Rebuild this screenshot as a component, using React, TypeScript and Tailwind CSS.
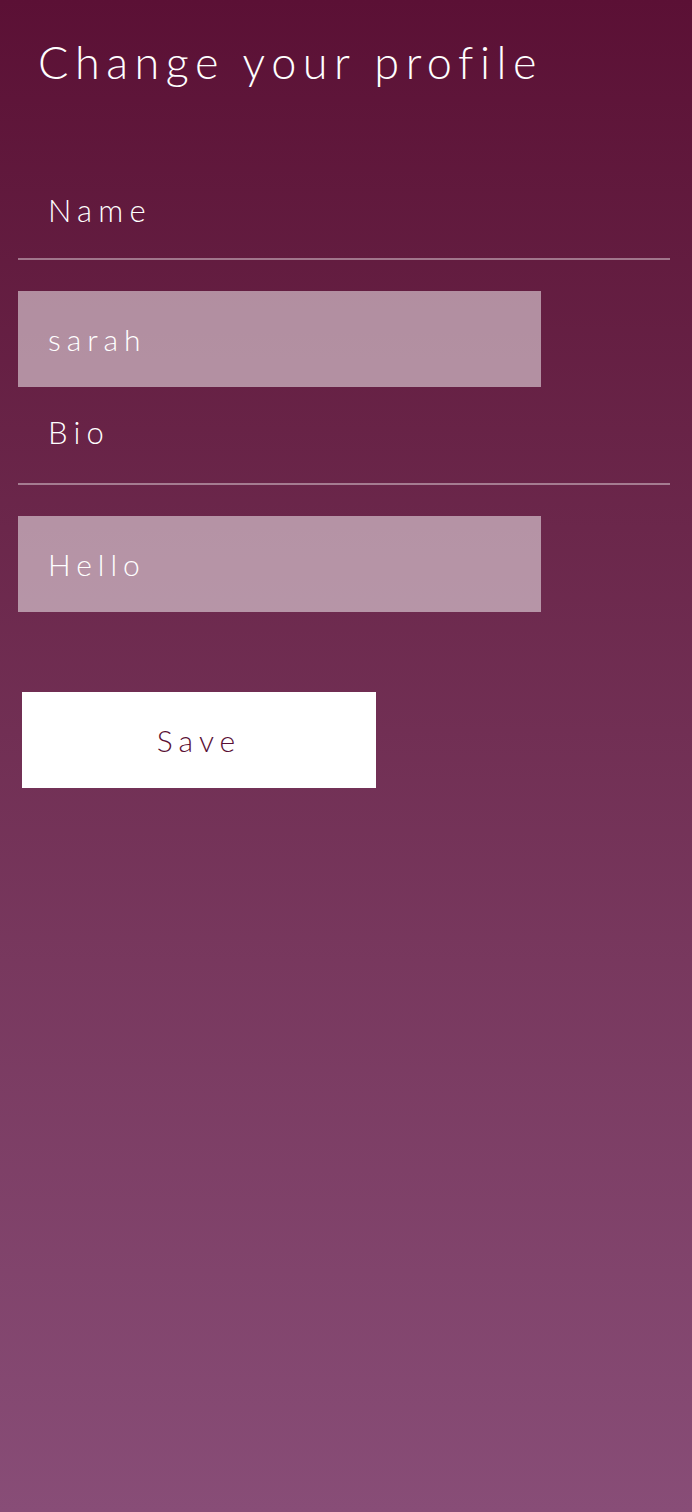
import React from 'react';

const font = { fontFamily: 'Lato, "Noto Sans", sans-serif' };

const Field: React.FC<{ label: string; value: string; labelBox: string }> = ({ label, value, labelBox }) => (
  <div className="flex flex-col">
    <div className={`flex items-end border-b-2 border-white/40 px-[30px] ${labelBox}`}>
      <span className="text-[31px] font-light leading-none tracking-[0.2em] text-white">{label}</span>
    </div>
    <div className="mt-[31px] flex h-[96px] w-[523px] items-center bg-white/50 px-[30px]">
      <span className="text-[30px] font-light leading-none tracking-[0.2em] text-white">{value}</span>
    </div>
  </div>
);

const App: React.FC = () => {
  return (
    <div className="min-h-screen bg-gradient-to-b from-[#5b1035] to-[#884d77]" style={font}>
      <h1 className="pl-[38px] pt-[40px] text-[45px] font-light leading-none tracking-[0.145em] text-white">
        Change your profile
      </h1>

      <div className="mt-[90px] flex flex-col px-[18px] pr-[22px]">
        <Field label="Name" value="sarah" labelBox="h-[85px] pb-[32px]" />
        <Field label="Bio" value="Hello" labelBox="h-[98px] pb-[35px]" />

        <button className="ml-[4px] mt-[80px] flex h-[96px] w-[354px] items-center justify-center bg-white">
          <span className="text-[30px] font-light leading-none tracking-[0.2em] text-[#5a0f35]">Save</span>
        </button>
      </div>
    </div>
  );
};

export default App;
